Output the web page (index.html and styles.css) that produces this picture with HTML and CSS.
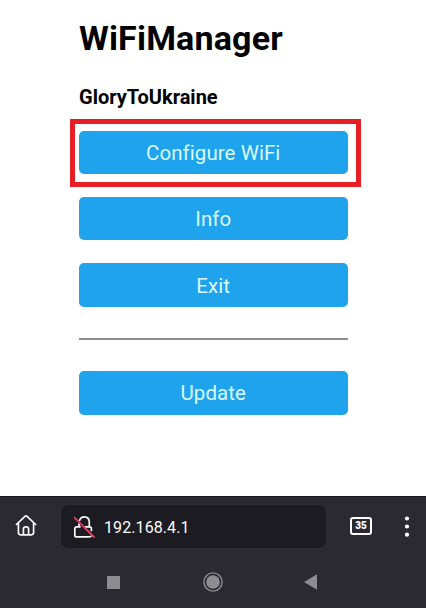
FILE: index.html
```html
<!DOCTYPE html>
<html lang="en">
<head>
<meta charset="utf-8">
<title>WiFiManager</title>
<link rel="stylesheet" href="styles.css">
</head>
<body>
<main class="page">
  <h1 class="title">WiFiManager</h1>
  <h3 class="subtitle">GloryToUkraine</h3>
  <div class="menu">
    <div class="highlighted"><button class="btn btn-configure">Configure WiFi</button></div>
    <button class="btn btn-info">Info</button>
    <button class="btn">Exit</button>
  </div>
  <hr class="divider">
  <button class="btn btn-update">Update</button>
</main>
<footer class="chrome">
  <div class="toolbar">
    <svg class="home" width="24" height="24" viewBox="0 0 24 24" fill="none" stroke="#fbfbfe" stroke-width="1.7" stroke-linecap="round" stroke-linejoin="round">
      <path d="M2.4 11.5 11.2 3.2Q12 2.5 12.8 3.2L21.6 11.5M4.4 10.2V19.6Q4.4 21.8 6.6 21.8H17.4Q19.6 21.8 19.6 19.6V10.2M9.4 21.5V16Q9.4 13.8 12 13.8T14.6 16V21.5"/>
    </svg>
    <div class="address">
      <svg class="lock" width="24" height="26" viewBox="0 0 24 26" fill="none" stroke="#fbfbfe" stroke-width="1.7" stroke-linecap="round">
        <path d="M7.5 6.5Q8.7 2.8 12.3 2.8Q17.3 2.8 17.3 8.3V12.2M13.5 12.8H17.6Q19.4 12.8 19.4 14.8V16.5M8 12.8H4.8Q2.8 12.8 2.8 15V20.9Q2.8 22.9 4.8 22.9H17.3Q18.9 22.9 19.3 21.8M7 10V12.5"/>
        <path stroke="#d5445f" stroke-width="1.8" d="M2.5 3.6 22 23"/>
      </svg>
      <span class="url">192.168.4.1</span>
    </div>
    <span class="tabs">35</span>
    <svg class="more" width="6" height="22" viewBox="0 0 6 22" fill="#fbfbfe"><circle cx="3" cy="2.5" r="2.1"/><circle cx="3" cy="10.5" r="2.1"/><circle cx="3" cy="18.7" r="2.1"/></svg>
  </div>
  <div class="system">
    <svg width="13" height="13" viewBox="0 0 13 13"><path fill="#8d8c90" d="M0 0H13V13H0Z"/></svg>
    <svg class="circle" width="20" height="20" viewBox="0 0 20 20"><circle cx="10" cy="10" r="9.1" fill="none" stroke="#8d8c90" stroke-width="1.4"/><circle cx="10" cy="10" r="6.8" fill="#8d8c90"/></svg>
    <svg width="13" height="16" viewBox="0 0 13 16"><path fill="#8d8c90" d="M0 8 13 .2V15.8Z"/></svg>
  </div>
</footer>
</body>
</html>
```
FILE: styles.css
```css
* { box-sizing: border-box; }
body {
  margin: 0;
  width: 426px;
  height: 608px;
  overflow: hidden;
  display: flex;
  flex-direction: column;
  background: #fff;
  color: #000;
  font-family: Roboto, "Liberation Sans", sans-serif;
}
svg { display: block; flex: none; }
.page { height: 496px; padding: 18px 78.5px 0 79px; }
.title { margin: 0; font-size: 34px; line-height: 40px; font-weight: 700; letter-spacing: .18px; white-space: nowrap; }
.subtitle { margin: 27px 0 0; font-size: 20px; line-height: 24px; font-weight: 700; }
.menu { display: flex; flex-direction: column; }
.highlighted { margin: 10px -13.5px 0 -9px; padding: 7px 8.5px 8px 4px; border: 5px solid #e81e25; height: 68px; }
.btn {
  display: block;
  width: 100%;
  height: 43.4px;
  padding: 2px 0 0;
  border: 0;
  border-radius: 5px;
  background: #1fa3ec;
  color: #d9fbff;
  font: 400 20.5px/41px Roboto, "Liberation Sans", sans-serif;
  letter-spacing: .06px;
}
.btn-configure { height: 43px; }
.btn-info { margin: 10px 0 23px; }
.divider { height: 2px; margin: 31px 0 31.5px; border: 0; background: #8f8d90; }
.chrome { height: 112px; background: #2b2a33; border-top: 1px solid #191820; }
.toolbar { display: flex; align-items: center; height: 59px; padding: 0 16px 0 14px; }
.home { margin-bottom: 3px; }
.address { display: flex; align-items: center; width: 265px; height: 43px; margin-left: 23px; padding-left: 11px; border-radius: 8px; background: #1c1b22; }
.url { margin-left: 8px; padding-top: 2px; color: #fbfbfe; font-size: 16px; line-height: 20px; letter-spacing: .09px; }
.tabs { width: 22px; height: 18px; margin: 0 0 2px 24px; border: 2px solid #fbfbfe; border-radius: 3px; color: #fbfbfe; font-size: 10px; line-height: 14px; font-weight: 900; text-align: center; }
.more { margin-left: auto; }
.system { display: flex; align-items: center; justify-content: space-between; height: 52px; padding: 0 109px 0 107px; }
.circle { margin: 0 -1px 0 1px; }
```
